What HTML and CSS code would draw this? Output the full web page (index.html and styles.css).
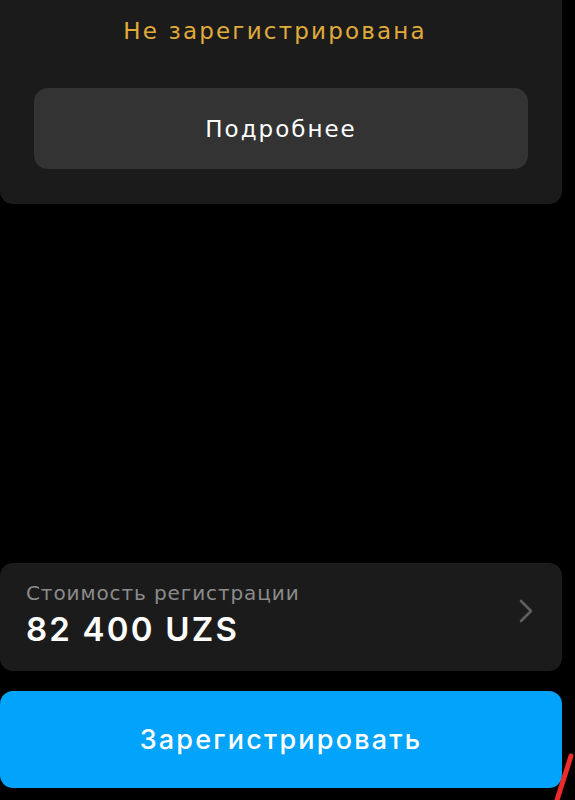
FILE: index.html
```html
<!DOCTYPE html>
<html lang="ru">
<head>
<meta charset="utf-8">
<link rel="stylesheet" href="styles.css">
</head>
<body>
<div class="page">
  <section class="status-card">
    <div class="status">Не зарегистрирована</div>
    <button class="more">Подробнее</button>
  </section>
  <section class="cost-card">
    <div class="cost-info">
      <div class="cost-label">Стоимость регистрации</div>
      <div class="cost-value">82 400 UZS</div>
    </div>
    <svg class="chevron" width="16" height="26" viewBox="0 0 16 26"><path d="M3 3 L13 13 L3 23" fill="none" stroke="#5f5f5f" stroke-width="2.6" stroke-linecap="round" stroke-linejoin="round"/></svg>
  </section>
  <button class="register">Зарегистрировать</button>
</div>
<svg class="mark" width="30" height="50" viewBox="0 0 30 50"><path d="M22 4 L8 48" stroke="#ee2a2a" stroke-width="5" stroke-linecap="round"/></svg>
</body>
</html>
```
FILE: styles.css
```css
html, body {
  margin: 0;
  padding: 0;
  background: #000;
}
body {
  font-family: "DejaVu Sans", "Open Sans", sans-serif;
  width: 575px;
  height: 800px;
  overflow: hidden;
  position: relative;
}
.page {
  height: 800px;
  display: flex;
  flex-direction: column;
  box-sizing: border-box;
  padding-bottom: 12px;
}
.status-card {
  width: 562px;
  height: 204px;
  background: #1b1b1b;
  border-radius: 0 0 13px 13px;
  box-sizing: border-box;
  padding-top: 14px;
  display: flex;
  flex-direction: column;
  align-items: center;
}
.status {
  color: #e0ab3b;
  font-size: 23px;
  letter-spacing: 2.2px;
  line-height: 34px;
  text-align: center;
  margin-right: 12px;
}
.more {
  margin-top: 40px;
  width: 494px;
  height: 81px;
  border: 0;
  border-radius: 14px;
  background: #333333;
  color: #fff;
  font-family: inherit;
  font-size: 23px;
  letter-spacing: 2px;
  padding: 0;
}
.cost-card {
  margin-top: auto;
  width: 562px;
  height: 108px;
  background: #1b1b1b;
  border-radius: 13px;
  box-sizing: border-box;
  padding: 0 28px 0 26px;
  display: flex;
  align-items: center;
  justify-content: space-between;
}
.cost-info {
  display: flex;
  flex-direction: column;
  gap: 2px;
  margin-top: -6px;
}
.cost-label {
  color: #8b8b8b;
  font-size: 20px;
  letter-spacing: 0.9px;
  line-height: 28px;
}
.cost-value {
  color: #fff;
  font-family: Inter, "DejaVu Sans", sans-serif;
  font-size: 33px;
  font-weight: 600;
  line-height: 40px;
  letter-spacing: 2.2px;
}
.chevron {
  margin-top: -12px;
}
.register {
  margin-top: 20px;
  width: 562px;
  height: 97px;
  border: 0;
  border-radius: 13px;
  background: #02a3fb;
  color: #fff;
  font-family: Inter, "DejaVu Sans", sans-serif;
  font-size: 27px;
  font-weight: 500;
  letter-spacing: 2.2px;
  padding: 0;
}
.mark {
  position: absolute;
  left: 549px;
  top: 752px;
}
```
